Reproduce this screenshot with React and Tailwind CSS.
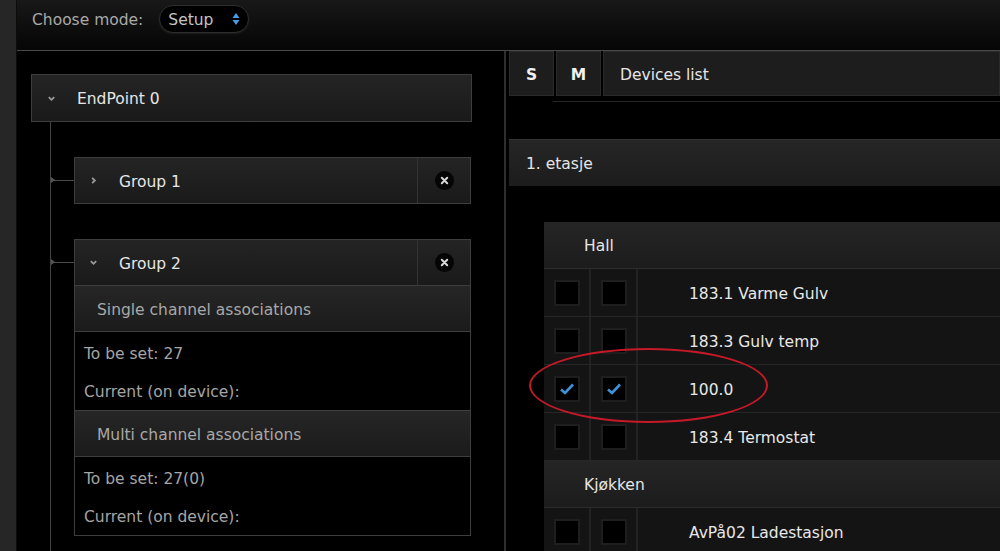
import React from 'react';

const font = { fontFamily: '"DejaVu Sans", "Open Sans", sans-serif' };

const Chevron = ({ down }) => (
  <svg width="9" height="9" viewBox="0 0 10 10" className="shrink-0">
    <path d={down ? 'M2 3.5 L5 6.5 L8 3.5' : 'M3.5 2 L6.5 5 L3.5 8'} fill="none" stroke="#9a9a9a" strokeWidth="2" />
  </svg>
);

const CloseBtn = () => (
  <div className="w-[53px] self-stretch border-l border-[#333] flex items-center justify-center">
    <div className="h-[19px] w-[19px] rounded-full bg-[#050505] flex items-center justify-center">
      <svg width="9" height="9" viewBox="0 0 10 10">
        <path d="M2 2 L8 8 M8 2 L2 8" stroke="#d8d8d8" strokeWidth="2.2" strokeLinecap="round" />
      </svg>
    </div>
  </div>
);

const GroupHeader = ({ label, open }) => (
  <div className="relative h-[47px] flex items-center bg-gradient-to-b from-[#242424] to-[#1a1a1a] border border-[#3d3d3d]">
    <div className="absolute left-[-24px] top-[22px] h-px w-[23px] bg-[#4a4a4a]" />
    <div className="absolute left-[-24px] top-[19px] h-0 w-0 border-y-[3px] border-y-transparent border-l-[4px] border-l-[#555]" />
    <div className="pl-[14px] w-[44px]">
      <Chevron down={open} />
    </div>
    <span className="flex-1 pt-[4px] text-[15.5px] text-[#e6e6e6]">{label}</span>
    <CloseBtn />
  </div>
);

const SubHeader = ({ label }) => (
  <div className="h-[46px] flex items-center pl-[22px] pt-[4px] bg-gradient-to-b from-[#262626] to-[#1b1b1b] border-x border-b border-[#3d3d3d] text-[15.5px] text-[#a8a8a8]">
    {label}
  </div>
);

const InfoBlock = ({ lines }) => (
  <div className="flex flex-col gap-[16px] border-x border-b border-[#3d3d3d] bg-black pl-[9px] pt-[11px] pb-[7px] text-[15.5px] text-[#a5a5a5]">
    {lines.map((l) => (
      <div key={l} className="leading-[22px]">{l}</div>
    ))}
  </div>
);

const Check = ({ on }) => (
  <div className="w-[47px] self-stretch flex items-center justify-center bg-[#141414] border-r-2 border-[#222]">
    <div className="h-[26px] w-[26px] bg-black border-2 border-[#1e1e1e] flex items-center justify-center">
      {on && (
        <svg width="16" height="14" viewBox="0 0 16 14">
          <path d="M2 7.5 L6 11 L14 2.5" fill="none" stroke="#3d93d9" strokeWidth="2.6" />
        </svg>
      )}
    </div>
  </div>
);

const DeviceRow = ({ name, on }) => (
  <div className="h-[48px] flex items-stretch border-b border-[#262626] bg-[#121212]">
    <Check on={on} />
    <Check on={on} />
    <div className="flex-1 flex items-center pl-[51px] pt-[4px] text-[15.5px] text-[#e8e8e8] bg-[#141414]">{name}</div>
  </div>
);

const RoomHeader = ({ label }) => (
  <div className="h-[47px] flex items-center pl-[40px] pt-[4px] bg-gradient-to-b from-[#252525] to-[#1c1c1c] border-b border-[#2c2c2c] text-[15.5px] text-[#e6e6e6]">
    {label}
  </div>
);

export default function App() {
  return (
    <div className="w-[1000px] h-[551px] overflow-hidden flex bg-black" style={font}>
      <div className="w-[17px] shrink-0 bg-[#262626] border-r border-[#0c0c0c]" />
      <div className="flex-1 flex flex-col min-w-0">
        <div className="h-[51px] shrink-0 flex items-start pt-[5px] pl-[15px] bg-gradient-to-b from-[#181818] to-[#060606] border-b border-[#4a4a4a]">
          <span className="mt-[4px] text-[15.5px] text-[#a9a9a9]">Choose mode:</span>
          <div className="ml-[16px] h-[28px] w-[90px] rounded-full bg-black border border-[#2e2e2e] shadow-[0_1px_2px_rgba(255,255,255,0.08)] flex items-center pl-[8px] pr-[8px]">
            <span className="flex-1 pt-[3px] text-[15.5px] text-[#c4c4c4]">Setup</span>
            <svg width="8" height="14" viewBox="0 0 8 14">
              <path d="M4 1 L7.5 6 L0.5 6 Z M4 13 L7.5 8 L0.5 8 Z" fill="#4a9be0" />
            </svg>
          </div>
        </div>
        <div className="flex-1 flex min-h-0">
          <div className="w-[489px] shrink-0 border-r-2 border-[#2e2e2e] pl-[14px] pt-[23px]">
            <div className="w-[441px] h-[48px] flex items-center bg-gradient-to-b from-[#242424] to-[#1a1a1a] border border-[#3d3d3d]">
              <div className="pl-[15px] w-[45px]">
                <Chevron down />
              </div>
              <span className="pt-[4px] text-[15.5px] text-[#e6e6e6]">EndPoint 0</span>
            </div>
            <div className="ml-[19px] border-l border-[#444] pt-[35px] pb-[40px]">
              <div className="ml-[23px] w-[397px]">
                <GroupHeader label="Group 1" />
                <div className="h-[35px]" />
                <GroupHeader label="Group 2" open />
                <SubHeader label="Single channel associations" />
                <InfoBlock lines={['To be set: 27', 'Current (on device):']} />
                <SubHeader label="Multi channel associations" />
                <InfoBlock lines={['To be set: 27(0)', 'Current (on device):']} />
              </div>
            </div>
          </div>
          <div className="relative flex-1 ml-[3px] min-w-0">
            <div className="h-[45px] flex gap-[2px] text-[15.5px]">
              <div className="w-[45px] flex items-center justify-center pt-[4px] bg-[#1d1d1d] border border-[#2a2a2a] font-bold text-[#f0f0f0]">S</div>
              <div className="w-[45px] flex items-center justify-center pt-[4px] bg-[#1d1d1d] border border-[#2a2a2a] font-bold text-[#f0f0f0]">M</div>
              <div className="flex-1 flex items-center pl-[16px] pt-[4px] bg-[#1d1d1d] border border-[#2a2a2a] text-[#e6e6e6]">Devices list</div>
            </div>
            <div className="ml-[44px] mt-[5px] h-px bg-[#262626]" />
            <div className="h-[37px]" />
            <div className="h-[47px] flex items-center pl-[17px] pt-[4px] bg-gradient-to-b from-[#262626] to-[#1c1c1c] border-t border-[#333] text-[15.5px] text-[#e6e6e6]">1. etasje</div>
            <div className="ml-[35px] mt-[36px]">
              <RoomHeader label="Hall" />
              <DeviceRow name="183.1 Varme Gulv" />
              <DeviceRow name="183.3 Gulv temp" />
              <DeviceRow name="100.0" on />
              <DeviceRow name="183.4 Termostat" />
              <RoomHeader label="Kjøkken" />
              <DeviceRow name="AvPå02 Ladestasjon" />
            </div>
            <div className="absolute left-[20px] top-[297px] h-[75px] w-[239px] rounded-[50%] border-2 border-[#c41a28] pointer-events-none" />
          </div>
        </div>
      </div>
    </div>
  );
}
